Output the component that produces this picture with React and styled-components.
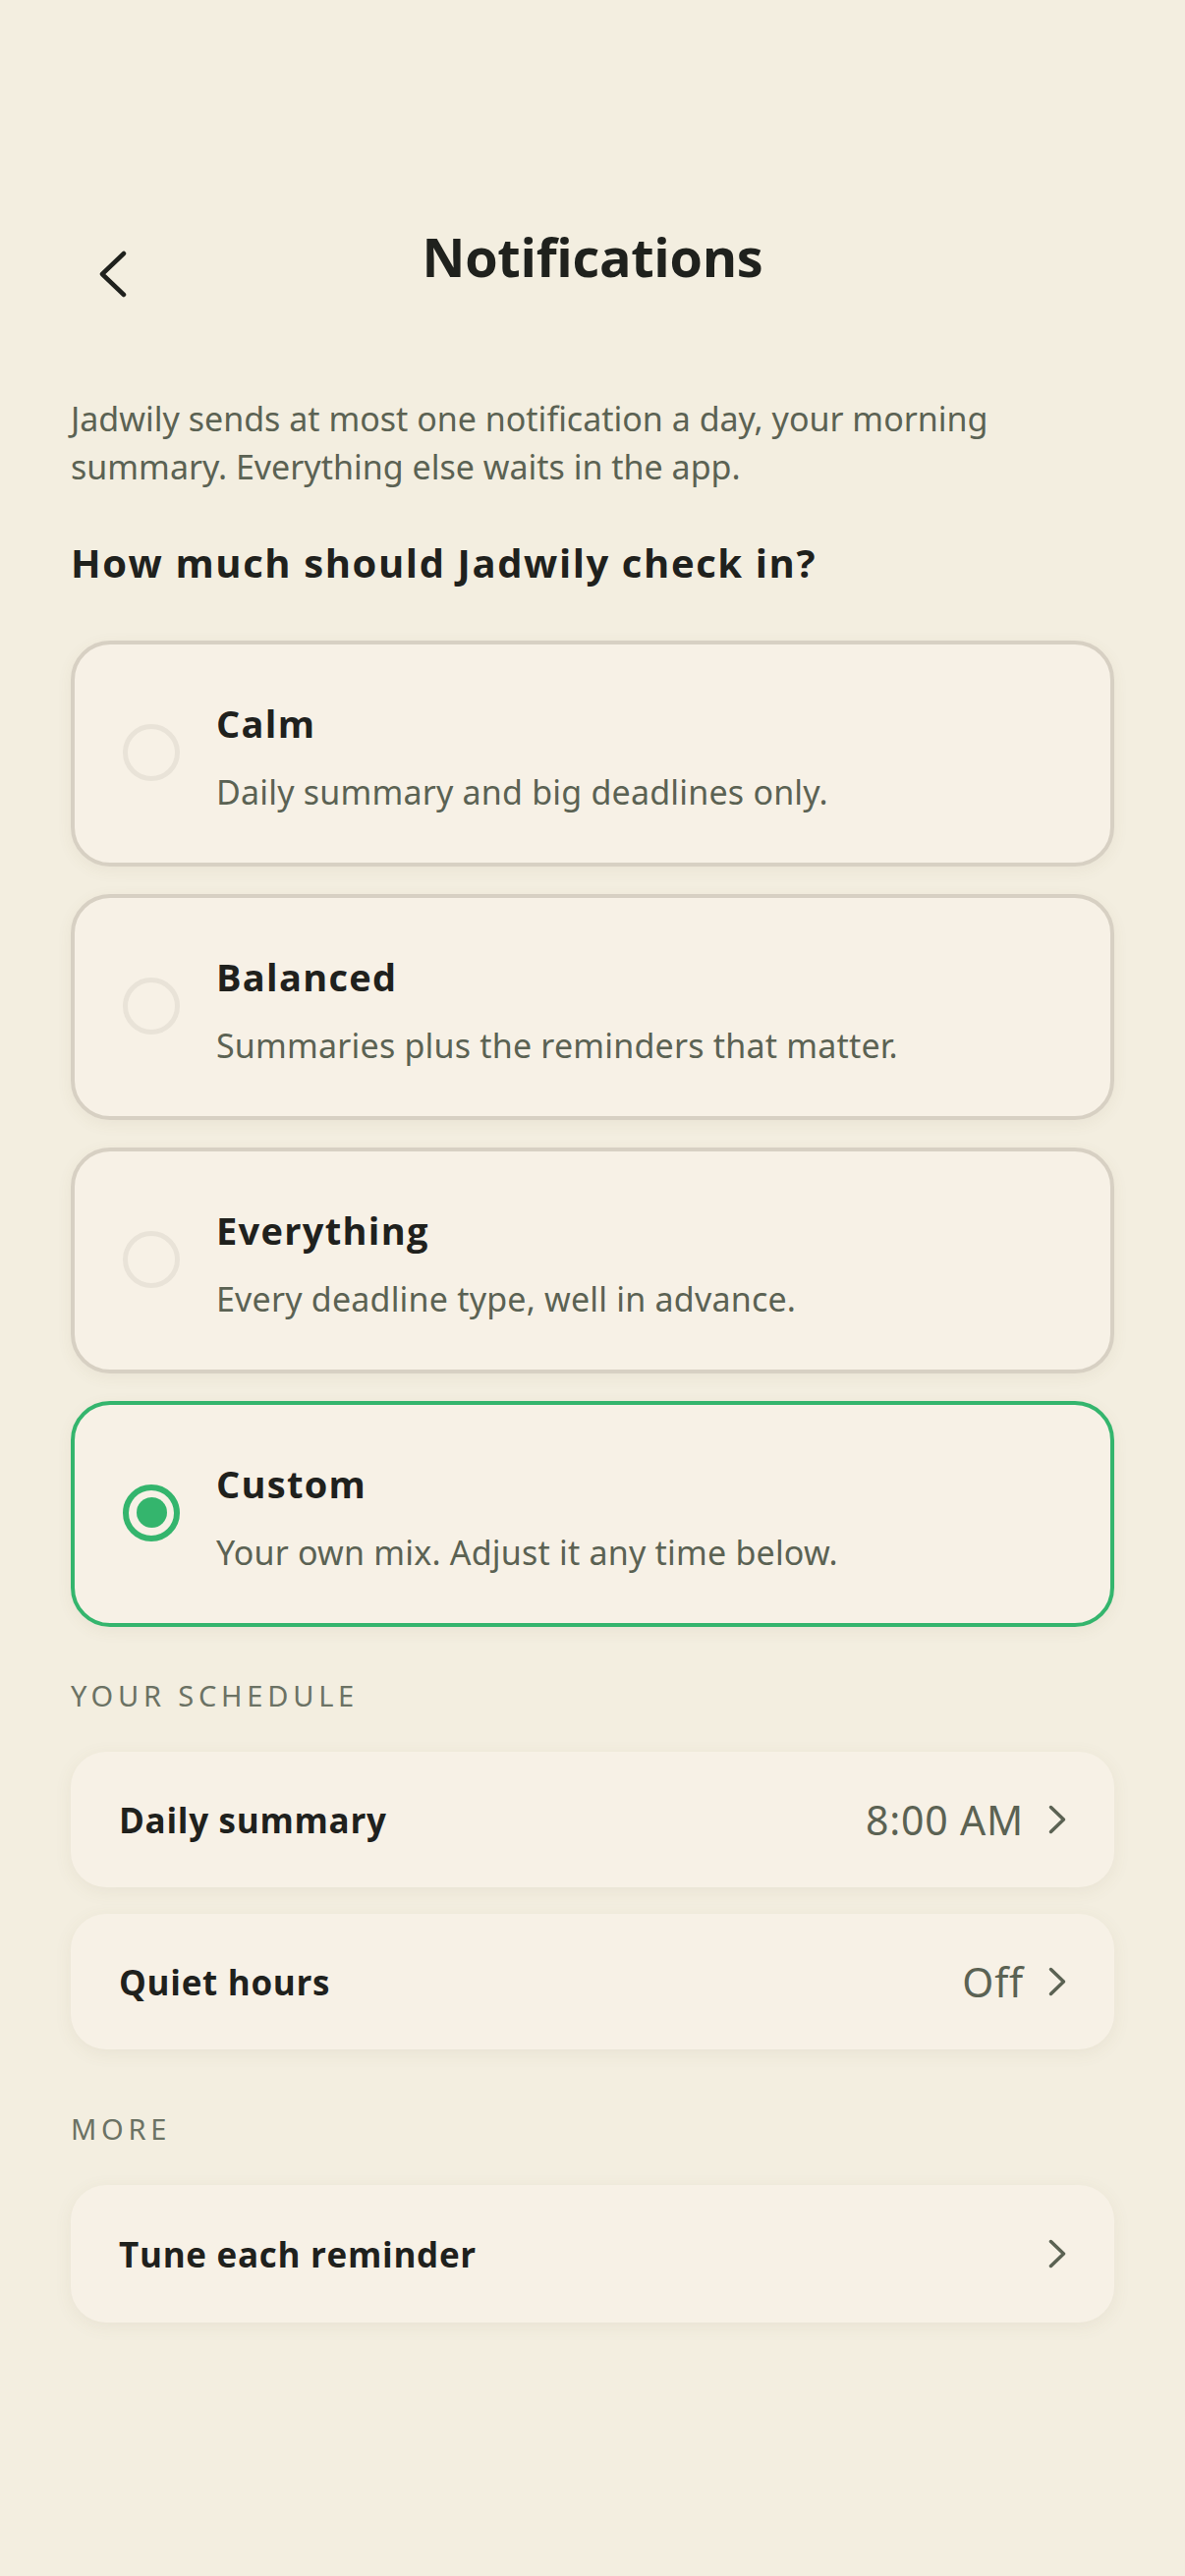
import React, { useState } from "react";
import styled, { createGlobalStyle, css } from "styled-components";

const GlobalStyle = createGlobalStyle`
  html, body {
    margin: 0;
    padding: 0;
    background: #f3eee0;
  }
  * { box-sizing: border-box; }
`;

const headingFont = `"Open Sans", "Noto Sans", Arial, sans-serif`;
const bodyFont = `"Noto Sans", "Open Sans", Arial, sans-serif`;

const Page = styled.div`
  min-height: 2622px;
  background: #f3eee0;
  padding: 229px 72px 0;
  font-family: ${bodyFont};
  color: #1f211d;
`;

const Header = styled.header`
  display: grid;
  grid-template-columns: 1fr auto 1fr;
  align-items: start;
`;

const BackButton = styled.button`
  justify-self: start;
  margin: 25px 0 0 27px;
  padding: 0;
  border: 0;
  background: none;
  width: 30px;
  height: 50px;
  display: flex;
  cursor: pointer;
`;

const Title = styled.h1`
  margin: 0;
  font-family: ${headingFont};
  font-weight: 700;
  font-size: 54px;
  line-height: 65px;
  color: #1f211d;
  letter-spacing: -0.3px;
`;

const Intro = styled.p`
  margin: 98px 0 0;
  max-width: 1000px;
  font-size: 34px;
  line-height: 49px;
  color: #5b6253;
`;

const Question = styled.h2`
  margin: 47px 0 0;
  font-family: ${headingFont};
  font-weight: 700;
  font-size: 40px;
  line-height: 52px;
  letter-spacing: 1.6px;
  color: #1f211d;
`;

const OptionList = styled.div`
  margin-top: 53px;
  display: flex;
  flex-direction: column;
  gap: 28px;
`;

const OptionCard = styled.button`
  display: flex;
  align-items: center;
  gap: 37px;
  width: 100%;
  height: 230px;
  padding: 0 48px 0 49px;
  border: 4px solid ${(p) => (p.$selected ? "#34b56d" : "#d7d0c3")};
  border-radius: 40px;
  background: #f7f1e6;
  box-shadow: 0 4px 16px rgba(120, 100, 60, 0.07);
  text-align: left;
  cursor: pointer;
  font: inherit;
`;

const Radio = styled.span`
  flex: none;
  width: 58px;
  height: 58px;
  border-radius: 50%;
  margin-bottom: 3px;
  display: flex;
  align-items: center;
  justify-content: center;
  ${(p) =>
    p.$selected
      ? css`
          border: 6px solid #34b56d;
          &::after {
            content: "";
            width: 31px;
            height: 31px;
            border-radius: 50%;
            background: #34b56d;
          }
        `
      : css`
          border: 5px solid #e9e3d8;
        `}
`;

const OptionText = styled.span`
  display: flex;
  flex-direction: column;
  gap: 24px;
  padding-top: 6px;
`;

const OptionTitle = styled.span`
  font-family: ${headingFont};
  font-weight: 700;
  font-size: 38px;
  line-height: 48px;
  letter-spacing: 1.3px;
  color: #1f211d;
`;

const OptionDesc = styled.span`
  font-family: ${bodyFont};
  font-size: 34px;
  line-height: 44px;
  letter-spacing: 0.2px;
  color: #5b6253;
`;

const SectionLabel = styled.h3`
  margin: ${(p) => p.$gap}px 0 0;
  font-family: ${bodyFont};
  font-weight: 400;
  font-size: 29px;
  line-height: 36px;
  letter-spacing: 0.165em;
  color: #6b7264;
`;

const RowList = styled.div`
  margin-top: 39px;
  display: flex;
  flex-direction: column;
  gap: 27px;
`;

const Row = styled.button`
  display: flex;
  align-items: center;
  width: 100%;
  height: ${(p) => p.$height || 138}px;
  padding: 0 48px 0 49px;
  border: 0;
  border-radius: 36px;
  background: #f7f1e6;
  box-shadow: 0 4px 18px rgba(120, 100, 60, 0.08);
  cursor: pointer;
  font: inherit;
  text-align: left;
`;

const RowLabel = styled.span`
  flex: 1;
  font-family: ${headingFont};
  font-weight: 700;
  font-size: 35px;
  letter-spacing: 0.7px;
  color: #1f211d;
`;

const RowValue = styled.span`
  font-family: ${bodyFont};
  font-size: 41px;
  letter-spacing: 0.8px;
  color: #5b6253;
  margin-right: 24px;
`;

const ChevronLeft = () => (
  <svg width="30" height="50" viewBox="0 0 30 50" fill="none">
    <path
      d="M27 4 L5 25 L27 46"
      stroke="#1f211d"
      strokeWidth="4.5"
      strokeLinecap="round"
      strokeLinejoin="round"
    />
  </svg>
);

const ChevronRight = () => (
  <svg width="20" height="30" viewBox="0 0 20 30" fill="none">
    <path
      d="M3.5 2.5 L16.5 15 L3.5 27.5"
      stroke="#5b6253"
      strokeWidth="3.5"
      strokeLinecap="round"
      strokeLinejoin="round"
    />
  </svg>
);

const options = [
  { id: "calm", title: "Calm", desc: "Daily summary and big deadlines only." },
  { id: "balanced", title: "Balanced", desc: "Summaries plus the reminders that matter." },
  { id: "everything", title: "Everything", desc: "Every deadline type, well in advance." },
  { id: "custom", title: "Custom", desc: "Your own mix. Adjust it any time below." },
];

export default function App() {
  const [level, setLevel] = useState("custom");

  return (
    <>
      <GlobalStyle />
      <Page>
        <Header>
          <BackButton aria-label="Back">
            <ChevronLeft />
          </BackButton>
          <Title>Notifications</Title>
          <span />
        </Header>

        <Intro>
          Jadwily sends at most one notification a day, your morning summary.
          Everything else waits in the app.
        </Intro>

        <Question>How much should Jadwily check in?</Question>

        <OptionList>
          {options.map((o) => (
            <OptionCard
              key={o.id}
              $selected={level === o.id}
              onClick={() => setLevel(o.id)}
            >
              <Radio $selected={level === o.id} />
              <OptionText>
                <OptionTitle>{o.title}</OptionTitle>
                <OptionDesc>{o.desc}</OptionDesc>
              </OptionText>
            </OptionCard>
          ))}
        </OptionList>

        <SectionLabel $gap={52}>YOUR SCHEDULE</SectionLabel>
        <RowList>
          <Row>
            <RowLabel>Daily summary</RowLabel>
            <RowValue>8:00 AM</RowValue>
            <ChevronRight />
          </Row>
          <Row>
            <RowLabel>Quiet hours</RowLabel>
            <RowValue>Off</RowValue>
            <ChevronRight />
          </Row>
        </RowList>

        <SectionLabel $gap={63}>MORE</SectionLabel>
        <RowList>
          <Row $height={140}>
            <RowLabel>Tune each reminder</RowLabel>
            <ChevronRight />
          </Row>
        </RowList>
      </Page>
    </>
  );
}
